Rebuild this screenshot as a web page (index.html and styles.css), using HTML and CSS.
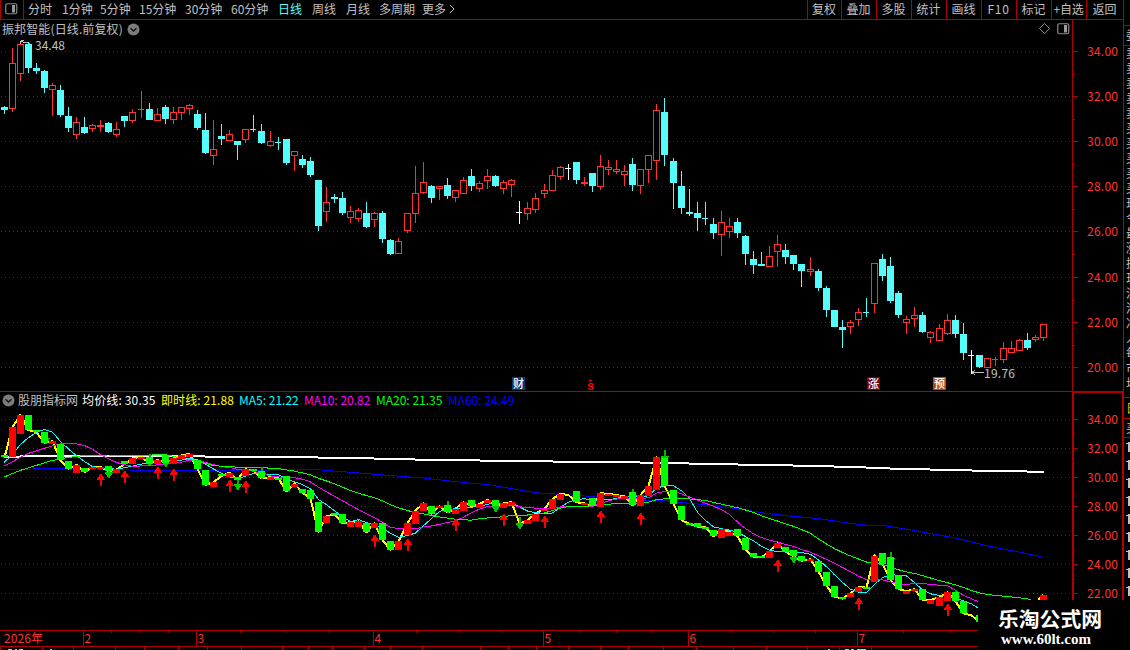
FILE: index.html
```html
<!DOCTYPE html>
<html lang="zh-CN">
<head>
<meta charset="utf-8">
<title>振邦智能</title>
<link rel="stylesheet" href="styles.css">
</head>
<body>
<div class="app">
  <div class="main">
    <nav class="toolbar">
      <span class="layout-btn"><svg width="13" height="12" viewBox="0 0 13 12"><rect x=".75" y=".75" width="11" height="10" rx="1.5" fill="none" stroke="#8c8c8c" stroke-width="1.2"/><rect x="7" y="2" width="3" height="7.5" fill="#9a9a9a"/></svg></span>
      <div class="periods">
        <span class="w34">分时</span><span class="w38">1分钟</span><span class="w39">5分钟</span><span class="w46">15分钟</span><span class="w46">30分钟</span><span class="w47">60分钟</span><span class="w34 active">日线</span><span class="w34">周线</span><span class="w33">月线</span><span class="w43">多周期</span><span>更多</span>
        <svg width="8" height="12" viewBox="0 0 8 12"><path d="M2 2L6 6L2 10" fill="none" stroke="#c0c0c0"/></svg>
      </div>
      <div class="tools">
        <span>复权</span><span>叠加</span><span>多股</span><span>统计</span><span>画线</span><span class="latin">F10</span><span>标记</span><span class="tight">+自选</span><span class="last">返回</span>
      </div>
    </nav>
    <section class="panel">
      <header class="price-head">
        <span class="title">振邦智能(日线.前复权)</span>
        <svg class="drop" width="13" height="13" viewBox="0 0 13 13"><circle cx="6.5" cy="6.5" r="6" fill="#7c7c7c"/><path d="M3.5 5.2L6.5 8L9.500 5.200" fill="none" stroke="#111" stroke-width="1.3"/></svg>
        <span class="head-icons">
          <svg width="11" height="11" viewBox="0 0 11 11"><path d="M5.500 .5L10.500 5.500L5.500 10.500L.5 5.500Z" fill="none" stroke="#8c8c8c"/></svg>
          <svg width="13" height="12" viewBox="0 0 13 12"><rect x=".75" y=".75" width="11" height="10" rx="1.5" fill="none" stroke="#8c8c8c" stroke-width="1.2"/><rect x="7" y="2" width="3" height="7.500" fill="#9a9a9a"/></svg>
        </span>
      </header>
      <svg id="price" class="plot" width="1123" height="353" viewBox="0 38 1123 353"></svg>
    </section>
    <section class="panel indicator">
      <header class="ind-head">
        <svg class="drop" width="13" height="13" viewBox="0 0 13 13"><circle cx="6.5" cy="6.5" r="6" fill="#7c7c7c"/><path d="M3.500 5.200L6.500 8L9.500 5.200" fill="none" stroke="#111" stroke-width="1.3"/></svg>
        <span class="source">股朋指标网</span><span class="avg">均价线: 30.35</span><span class="now">即时线: 21.88</span><span class="ma5">MA5: 21.22</span><span class="ma10">MA10: 20.82</span><span class="ma20">MA20: 21.35</span><span class="ma60">MA60: 24.49</span>
      </header>
      <svg id="indicator" class="plot" width="1123" height="220" viewBox="0 410 1123 220"></svg>
    </section>
    <svg id="timeline" class="plot" width="1123" height="20" viewBox="0 630 1123 20"></svg>
  </div>
  <svg id="side" class="side" width="7" height="650" viewBox="1123 0 7 650"></svg>
  <div class="brand"><strong>乐淘公式网</strong><span>www.60lt.com</span></div>
</div>
<script src="chart.js"></script>
</body>
</html>
```

FILE: styles.css
```css
* { box-sizing: border-box; }
body { margin: 0; background: #000; overflow: hidden; }
.app {
  position: relative;
  display: flex;
  width: 1130px;
  height: 650px;
  overflow: hidden;
  background: #000;
  color: #c0c0c0;
  font: 12px/18px "Noto Sans CJK SC", sans-serif;
}
.main { width: 1123px; display: flex; flex-direction: column; }
.plot, .side { display: block; flex: none; overflow: visible; }

.toolbar {
  height: 20px;
  flex: none;
  display: flex;
  border-bottom: 1px solid #b00000;
  white-space: nowrap;
}
.layout-btn {
  width: 24px;
  padding: 3px 0 0 4px;
  border-left: 1px solid #b00000;
  border-right: 1px solid #b00000;
}
.layout-btn svg { display: block; }
.periods { display: flex; align-items: center; padding-left: 4px; height: 18px; }
.w33 { width: 33px; }
.w34 { width: 34px; }
.w38 { width: 38px; }
.w39 { width: 39px; }
.w43 { width: 43px; }
.w46 { width: 46px; }
.w47 { width: 47px; }
.active { color: #54fcfc; }
.periods svg { margin-left: 2px; }
.tools { display: flex; margin-left: auto; }
.tools span {
  width: 35px;
  padding-right: 1px;
  border-left: 1px solid #b00000;
  text-align: center;
}
.tools span:first-child { width: 34px; }
.tools .latin { letter-spacing: .7px; }
.tools .tight { letter-spacing: -.2px; }
.tools .last { width: 37px; }

.price-head {
  width: 1073px;
  height: 18px;
  display: flex;
  align-items: center;
  padding-left: 2px;
  border-right: 1px solid #b00000;
}
.title { width: 125px; letter-spacing: .12px; white-space: nowrap; }
.head-icons { display: flex; gap: 7px; margin-left: auto; padding-right: 2px; }
.indicator { border-top: 1px solid #b00000; }
.ind-head {
  height: 18px;
  display: flex;
  align-items: center;
  padding-left: 2px;
  background:
    linear-gradient(#b00000, #b00000) 1072px 0 / 2px 18px no-repeat,
    linear-gradient(#b00000, #b00000) 1072px 0 / 51px 1px no-repeat,
    linear-gradient(#b00000, #b00000) 1122px 0 / 1px 18px no-repeat;
  white-space: nowrap;
}
.ind-head .drop { margin: 0 3px 2px 0; }
.ind-head span { line-height: 16px; margin-bottom: 3px; }
.source { width: 64px; }
.avg { width: 79px; color: #fff; letter-spacing: .15px; }
.now { width: 78px; color: #ff0; letter-spacing: .1px; }
.ma5 { width: 65px; color: #0ff; }
.ma10 { width: 72px; color: #f0f; }
.ma20 { width: 72px; color: #0f0; }
.ma60 { color: #00f; }

.axis { fill: #ff3232; }
.note { fill: #c0c0c0; }
.badge-text { fill: #fff; font-size: 11px; font-weight: 500; }
.dividend { fill: #f00; font: bold 13px "Liberation Sans", sans-serif; }

.brand {
  position: absolute;
  left: 978px;
  top: 600px;
  width: 152px;
  height: 50px;
  padding: 7px 0 0 20px;
  background: #000;
  color: #fff;
  white-space: nowrap;
}
.brand strong { display: block; font-size: 20.8px; line-height: 23px; font-weight: 700; }
.brand span {
  display: block;
  padding-left: 3px;
  font: bold 15px/18px "Liberation Serif", serif;
}
```

FILE: chart.js
```js
const RED = '#ff3232', CYAN = '#54fcfc', LINE = '#b00000', GRID = '#a80000';

// kind, high, top of body, bottom of body, low
const candles = `c 106 107 110 114|r 48 63 109 112|r 43 44 74 81|c 42 44 68 73|c 63 68 71 74|c 70 71 88 93|r 83 85 90 116|c 85 90 115 117|c 107 116 128 132|r 117 122 135 139|c 117 127 133 134|r 124 125 129 132|r 120 125 127 132|c 122 123 132 133|r 122 129 135 137|c 116 116 121 127|r 109 112 121 123|r 91 109 110 118|c 103 109 120 120|r 108 114 121 121|c 105 107 119 124|r 107 112 120 124|r 107 107 113 120|r 104 105 109 115|c 110 114 128 130|c 113 130 153 154|r 120 149 156 165|c 124 136 139 145|r 130 134 141 141|c 141 141 145 160|r 129 129 140 143|c 115 129 130 132|c 124 131 143 144|r 131 141 146 147|c 137 142 143 150|c 139 139 163 165|r 151 151 156 171|c 155 159 165 168|c 157 161 175 177|c 180 180 226 231|r 187 202 212 222|c 194 197 199 203|c 192 198 213 215|r 206 211 218 223|r 208 210 219 222|c 202 213 227 228|r 212 213 220 227|c 211 213 239 243|c 239 240 254 255|r 238 241 254 254|r 213 213 231 233|r 166 193 214 223|r 162 182 193 194|c 185 186 198 203|r 186 186 189 200|c 178 185 196 199|r 190 190 198 202|r 177 180 194 194|c 169 176 186 191|r 181 183 189 192|r 169 176 181 189|c 175 176 186 187|r 180 182 189 194|r 179 180 185 197|w 201 212 213 224|r 202 208 214 220|r 193 198 210 213|r 184 190 194 198|r 170 175 191 191|r 166 167 177 180|w 164 168 169 180|c 162 162 180 184|r 177 182 184 186|c 173 173 186 192|r 155 166 187 190|r 160 167 170 175|r 160 169 172 174|r 165 171 175 186|c 158 164 185 191|r 169 169 186 194|r 155 155 170 183|r 104 110 161 180|c 98 112 155 166|c 158 161 183 209|c 171 186 208 214|c 189 212 214 216|c 202 213 218 231|c 202 218 219 225|c 218 224 233 239|r 211 222 235 256|r 218 226 232 238|c 218 222 233 238|c 235 236 254 265|c 251 259 265 274|c 252 264 266 266|r 246 256 267 267|r 235 244 252 267|c 244 250 257 264|c 255 255 264 270|c 264 264 271 287|r 257 269 272 276|c 269 271 288 291|c 286 288 310 317|c 310 310 327 327|c 320 327 330 348|r 320 322 327 334|r 308 312 320 326|c 298 312 313 317|r 263 263 304 313|c 254 259 276 281|c 257 266 301 303|c 291 293 315 318|r 316 319 323 334|r 307 315 319 327|c 312 315 332 333|r 331 332 338 343|r 324 328 341 341|r 314 320 334 335|c 315 320 334 338|c 323 334 353 360|w 350 355 356 374|c 355 355 367 368|r 358 358 368 368|r 357 359 360 366|r 342 348 360 363|r 341 348 353 353|r 339 340 351 351|c 333 340 348 350|r 335 337 340 342|r 324 324 338 341`
  .split('|').map((row, i) => {
    const [kind, ...v] = row.split(' ');
    const [high, top, bottom, low] = v.map(Number);
    return { kind, high, top, bottom, low, x: 4 + 8 * i + Math.floor(i * 0.0602 + 0.02) };
  });

const rect = (x, y, w, h, fill) => `<rect x="${x}" y="${y}" width="${w}" height="${h}" fill="${fill}" shape-rendering="crispEdges"/>`;
const text = (x, y, s, cls, len) => `<text x="${x}" y="${y}" class="${cls}"${len ? ` textLength="${len}"` : ''}>${s}</text>`;
const poly = (pts, color, w = 1) => `<polyline points="${pts.map(p => p.join()).join(' ')}" fill="none" stroke="${color}" stroke-width="${w}" stroke-linejoin="round" shape-rendering="crispEdges"/>`;
const gridLine = y => {
  let d = '';
  for (let x = 1; x < 1072; x += 4) d += `M${x} ${y}h1v1h-1z`;
  return `<path d="${d}" fill="${GRID}" shape-rendering="crispEdges"/>`;
};

function drawPrice() {
  const rows = [51, 96, 141, 186, 231, 277, 322, 367];
  let s = rect(1072, 38, 1, 353, LINE);
  rows.forEach((y, i) => {
    s += gridLine(y) + rect(1073, y, 5, 1, LINE) + text(1087, y + 5, (34 - 2 * i) + '.00', 'axis', 31);
    if (i < 7) s += rect(1073, y + 23, 2, 1, LINE);
  });
  for (const c of candles) {
    const color = c.kind === 'r' ? RED : c.kind === 'c' ? CYAN : '#fff';
    const h = c.bottom - c.top;
    s += rect(c.x, c.high, 1, c.top - c.high, color) + rect(c.x, c.bottom, 1, c.low - c.bottom, color);
    if (h < 2) s += rect(c.x - 3, c.top, 6, 1, color) + rect(c.x, c.top, 1, 1, color);
    else if (c.kind === 'r' && h > 2) s += `<rect x="${c.x - 2.5}" y="${c.top + .5}" width="6" height="${h - 1}" fill="#000" stroke="${RED}" shape-rendering="crispEdges"/>`;
    else s += rect(c.x - 3, c.top, 7, h, color);
  }
  s += `<g fill="none" stroke="#c0c0c0" shape-rendering="crispEdges"><path d="M20.500 40.500H24M20.500 40.500V44M21 41.500L30 43.500"/><path d="M972 372.500H984M972 372.500L975.500 369.500M972 372.500L975.500 375.500"/></g>`;
  s += text(35, 50, '34.48', 'note', 30) + text(984, 378, '19.76', 'note', 31);
  for (const [x, bg, ch] of [[512, '#003c78', '财'], [867, '#800000', '涨'], [933, '#b84810', '预']])
    s += rect(x, 377, 13, 13, bg) + text(x + 1, 388, ch, 'badge-text');
  s += `<path d="M588 381.500L590.500 379L593 381.500Z" fill="#f00"/>` + text(587, 390, 's', 'dividend');
  document.getElementById('price').innerHTML = s;
}

const scale = y => 419.5 + (y - 51.3) * 0.6425;

function average(n, lead) {
  const close = candles.map(c => scale(c.kind === 'r' ? c.top : c.bottom));
  const pts = [...lead];
  for (let i = n - 1; i < candles.length; i++) {
    let sum = 0;
    for (let k = 0; k < n; k++) sum += close[i - k];
    pts.push([candles[i].x + .5, sum / n]);
  }
  return pts;
}

function drawIndicator() {
  let s = rect(1072, 410, 2, 220, LINE) + rect(1122, 410, 1, 220, LINE);
  [419, 448, 477, 506, 535, 564, 593].forEach((y, i) => {
    s += gridLine(y) + rect(1074, y, 4, 1, LINE) + rect(1074, y + 15, 1, 1, LINE) + text(1087, y + 5, (34 - 2 * i) + '.00', 'axis', 31);
  });
  // average price, drawn as two pixel steps
  let from = 4;
  for (const [to, y] of [[20, 456], [205, 455], [318, 456], [374, 457], [415, 458], [480, 459], [553, 460], [640, 461], [689, 462], [738, 463], [793, 464], [834, 465], [866, 466], [890, 467], [930, 468], [972, 469], [1027, 470], [1044, 471]]) {
    s += rect(from, y, to - from, 2, '#fff');
    from = to;
  }
  s += poly(average(60, [[4, 469.5], [32, 469.5], [34, 468.5], [75, 468.5], [130, 470], [260, 470.3], [295, 469], [315, 469.5], [347, 472], [390, 475.5], [423, 478], [450, 481], [470, 483]]), '#00f');
  s += poly(candles.map(c => [c.x + .5, scale(c.kind === 'r' ? c.top : c.bottom)]), '#ff0', 2);
  s += poly(average(5, [[4, 462.5], [12, 455], [20, 445], [28, 438]]), '#0ff');
  s += poly(average(10, [[4, 466], [12, 462], [20, 457.5], [28, 453.5], [36, 451], [44, 448.5], [52, 446], [60, 444], [68, 443.5]]), '#f0f');
  s += poly(average(20, [[4, 477], [20, 470.5], [36, 465.5], [52, 460.5], [68, 457.5], [84, 455.5], [108, 455], [148, 455.5]]), '#0f0');
  for (const [x, y] of [[109, 478], [150, 466], [166, 467], [238, 490], [262, 479], [448, 513], [496, 512], [520, 529], [633, 501], [665, 462], [794, 563], [891, 564], [956, 602], [46, 444], [382, 535]])
    s += rect(x - 1, y - 12, 2, 7, '#00b400') + `<path d="M${x - 4.5} ${y - 6}H${x + 4.5}L${x + .5} ${y}H${x - .5}Z" fill="#00c800" shape-rendering="crispEdges"/>`;
  for (const c of candles) {
    const a = Math.round(scale(c.top)), b = Math.round(scale(c.bottom));
    if (c.kind !== 'w') s += rect(c.x - 3, a, 7, Math.max(2, b - a), c.kind === 'r' ? '#f00' : '#0f0');
  }
  for (const [x, y] of [[101, 474], [125, 471], [158, 467], [174, 469], [230, 480], [246, 481], [375, 535], [408, 539], [456, 519], [504, 514], [545, 516], [601, 511], [641, 513], [778, 560], [859, 598], [948, 604]])
    s += `<path d="M${x - .5} ${y}H${x + .5}L${x + 4.5} ${y + 6}H${x - 4.5}Z" fill="#f00" shape-rendering="crispEdges"/>` + rect(x - 1, y + 5, 2, 7, '#f00');
  document.getElementById('indicator').innerHTML = s;
}

function drawTimeline() {
  let s = rect(0, 630, 1123, 1, LINE) + rect(0, 646, 1123, 1, LINE);
  for (const [x, m] of [[83, 2], [196, 3], [373, 4], [543, 5], [688, 6], [857, 7]])
    s += rect(x, 630, 1, 16, LINE) + text(x + 1.5, 643, m, 'axis');
  s += text(4, 643, '2026年', 'axis', 39);
  for (const x of [111, 140, 168, 240, 285, 329, 416, 458, 501, 579, 616, 652, 730, 773, 815, 903, 950]) s += rect(x, 631, 1, 2, LINE);
  for (const x of [0, 42, 73, 115, 144, 178, 207, 241, 282, 308, 332, 364, 390, 422, 480, 508, 536, 568, 600, 628, 663, 696, 733, 766, 807, 839, 871]) s += rect(x, 647, 1, 3, LINE);
  s += rect(8, 649, 4, 1, '#c0c0c0') + rect(15, 649, 2, 1, '#c0c0c0') + rect(19, 649, 4, 1, '#c0c0c0') + rect(50, 649, 2, 1, '#c0c0c0');
  s += rect(828, 649, 2, 1, CYAN) + rect(845, 649, 4, 1, CYAN) + rect(851, 649, 3, 1, CYAN) + rect(857, 649, 9, 1, CYAN);
  document.getElementById('timeline').innerHTML = s;
}

function drawSide() {
  let s = rect(1123, 0, 1, 600, LINE);
  for (const y of [25, 45, 397, 418, 437]) s += rect(1124, y, 6, 1, LINE);
  [...'委卖卖卖卖卖买买买买买现今最涨换玩流港净人每市均'].forEach((ch, i) => {
    s += text(1126, i ? 58 + (i - 1) * 15 : 40, ch, 'note');
  });
  s += `<text x="1126" y="413" fill="#cc0">日</text>` + text(1126, 433, '买', 'note');
  for (let y = 442; y < 600; y += 18) s += rect(1126, y + 1, 2, 1, '#c0c0c0') + rect(1128, y, 2, 10, '#c0c0c0');
  document.getElementById('side').innerHTML = s;
}

drawPrice();
drawIndicator();
drawTimeline();
drawSide();
```
